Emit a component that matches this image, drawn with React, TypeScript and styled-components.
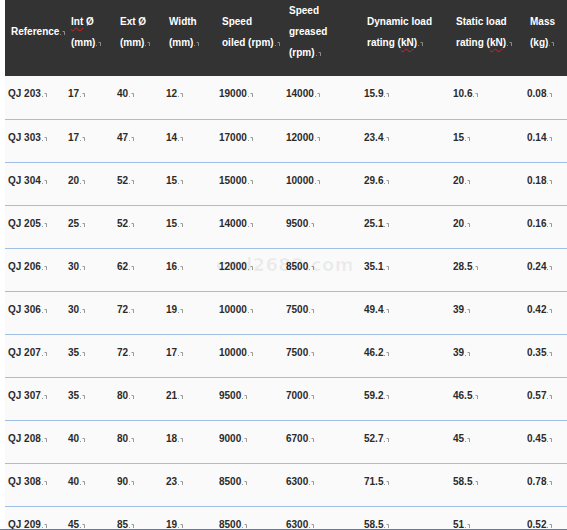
import React from "react";
import styled, { createGlobalStyle } from "styled-components";

const Global = createGlobalStyle`
  html, body { margin: 0; padding: 0; background: #ffffff; }
  body { font-family: "Liberation Sans", Arial, sans-serif; }
`;

const Frame = styled.div`
  position: relative;
  height: 530px;
  box-sizing: border-box;
  overflow: hidden;
  border-bottom: 1px solid #5d7daf;
  padding-left: 5px;
`;

const Table = styled.table`
  width: 562px;
  table-layout: fixed;
  border-collapse: collapse;
  background: #fafafa;
  font-size: 10px;
  font-weight: bold;
`;

const HeadCell = styled.th`
  background: #333333;
  color: #ffffff;
  text-align: left;
  vertical-align: middle;
  height: 76px;
  padding: 0 0 13px 6px;
  line-height: 21px;
  font-weight: bold;
  box-sizing: border-box;
  white-space: nowrap;
`;

const Row = styled.tr`
  border-bottom: 1px solid #9fc0e3;
`;

const Cell = styled.td`
  color: #2b2b2b;
  vertical-align: top;
  height: 43px;
  padding: 12px 0 0 3px;
  line-height: 12px;
  box-sizing: border-box;
  white-space: nowrap;
`;

const Spell = styled.span`
  text-decoration: underline wavy #e0201a;
  text-decoration-thickness: 1px;
  text-underline-offset: 2px;
`;

const MarkSvg = styled.svg`
  display: inline-block;
  margin-left: 1px;
  vertical-align: baseline;
`;

const Watermark = styled.div`
  position: absolute;
  left: 216px;
  top: 254px;
  font-family: "DejaVu Sans", sans-serif;
  font-weight: bold;
  font-size: 18px;
  color: rgba(0, 0, 0, 0.06);
  pointer-events: none;
  letter-spacing: 0.3px;
`;

const Mark: React.FC<{ light?: boolean }> = ({ light }) => (
  <MarkSvg width="6" height="6" viewBox="0 0 6 6">
    <rect x="0" y="5" width="1" height="1" fill={light ? "#8a8a8a" : "#9a9a9a"} />
    <path d="M2.5 2.5 H4.5 V6" stroke={light ? "#8a8a8a" : "#9a9a9a"} strokeWidth="1" fill="none" />
  </MarkSvg>
);

const widths = [60, 49, 49, 53, 67, 78, 89, 74, 43];

const headers: React.ReactNode[] = [
  <>Reference<Mark light /></>,
  <><Spell>Int</Spell> Ø<br />(mm)<Mark light /></>,
  <>Ext Ø<br />(mm)<Mark light /></>,
  <>Width<br />(mm)<Mark light /></>,
  <>Speed<br />oiled (rpm)<Mark light /></>,
  <>Speed<br />greased<br />(rpm)<Mark light /></>,
  <>Dynamic load<br />rating (<Spell>kN</Spell>)<Mark light /></>,
  <>Static load<br />rating (<Spell>kN</Spell>)<Mark light /></>,
  <>Mass<br />(kg)<Mark light /></>,
];

const rows: string[][] = [
  ["QJ 203", "17", "40", "12", "19000", "14000", "15.9", "10.6", "0.08"],
  ["QJ 303", "17", "47", "14", "17000", "12000", "23.4", "15", "0.14"],
  ["QJ 304", "20", "52", "15", "15000", "10000", "29.6", "20", "0.18"],
  ["QJ 205", "25", "52", "15", "14000", "9500", "25.1", "20", "0.16"],
  ["QJ 206", "30", "62", "16", "12000", "8500", "35.1", "28.5", "0.24"],
  ["QJ 306", "30", "72", "19", "10000", "7500", "49.4", "39", "0.42"],
  ["QJ 207", "35", "72", "17", "10000", "7500", "46.2", "39", "0.35"],
  ["QJ 307", "35", "80", "21", "9500", "7000", "59.2", "46.5", "0.57"],
  ["QJ 208", "40", "80", "18", "9000", "6700", "52.7", "45", "0.45"],
  ["QJ 308", "40", "90", "23", "8500", "6300", "71.5", "58.5", "0.78"],
  ["QJ 209", "45", "85", "19", "8500", "6300", "58.5", "51", "0.52"],
];

export default function App() {
  return (
    <>
      <Global />
      <Frame>
        <Table>
          <colgroup>
            {widths.map((w, i) => (
              <col key={i} style={{ width: w }} />
            ))}
          </colgroup>
          <thead>
            <tr>
              {headers.map((h, i) => (
                <HeadCell key={i}>{h}</HeadCell>
              ))}
            </tr>
          </thead>
          <tbody>
            {rows.map((r, i) => (
              <Row key={i}>
                {r.map((c, j) => (
                  <Cell key={j}>
                    {c}
                    <Mark />
                  </Cell>
                ))}
              </Row>
            ))}
          </tbody>
        </Table>
        <Watermark>cad2688.com</Watermark>
      </Frame>
    </>
  );
}
